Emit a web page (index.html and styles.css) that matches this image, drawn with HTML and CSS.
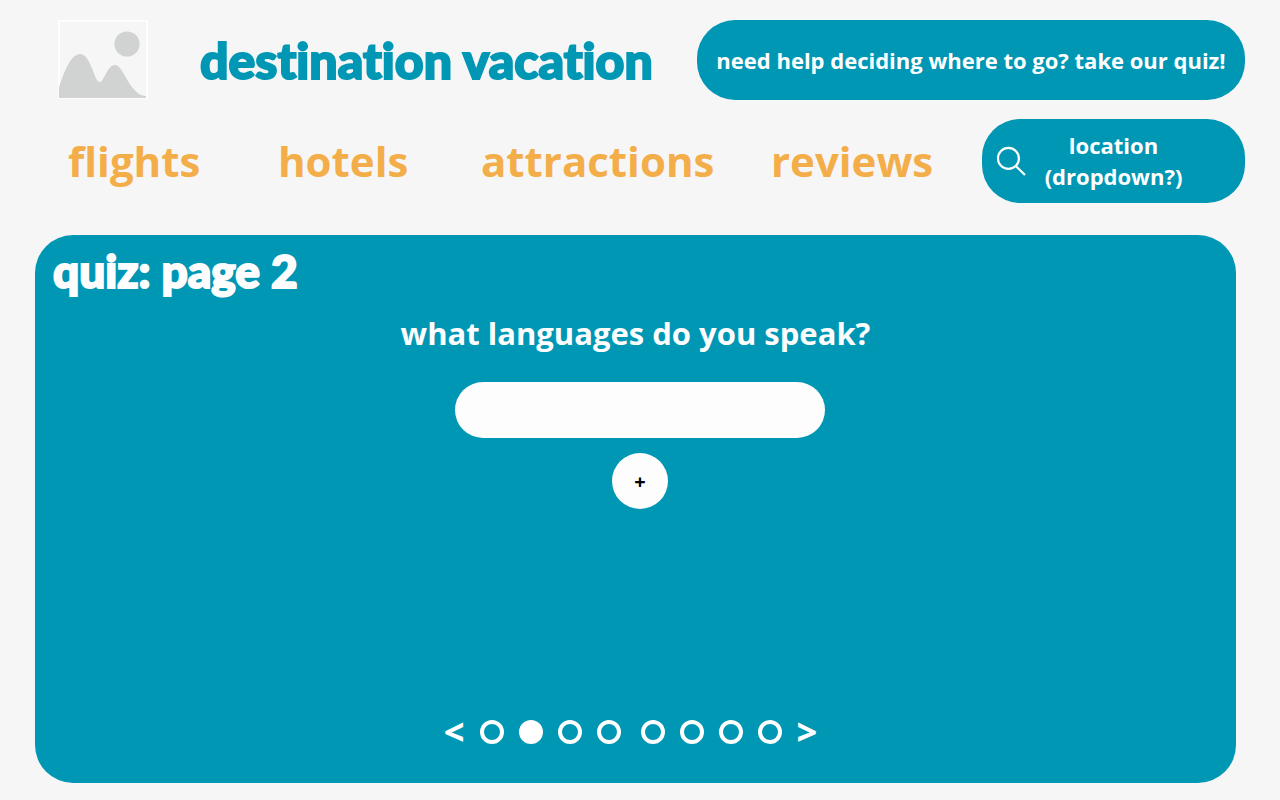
FILE: index.html
```
<!DOCTYPE html>
<html lang="en">
<head>
<meta charset="utf-8">
<meta name="viewport" content="width=device-width, initial-scale=1">
<title>destination vacation</title>
<link rel="stylesheet" href="styles.css">
</head>
<body>
<header class="masthead">
  <svg class="logo" viewBox="0 0 90 80" aria-hidden="true">
    <rect class="logo-frame" x="1" y="1" width="88" height="77"/>
    <circle class="logo-shape" cx="69" cy="24" r="12.6"/>
    <path class="logo-shape" d="M1 78V68C7 48 14 34 22 34C33 34 36 62 42 62C46 62 49 45 57 45C66 45 71 75 88 76V78Z"/>
  </svg>
  <h1 class="brand">destination vacation</h1>
  <a class="quiz-link" href="#quiz">need help deciding where to go? take our quiz!</a>
</header>
<nav class="menu">
  <a href="#flights">flights</a>
  <a href="#hotels">hotels</a>
  <a href="#attractions">attractions</a>
  <a href="#reviews">reviews</a>
  <button class="location" type="button" aria-haspopup="listbox">
    <svg class="search-icon" viewBox="0 0 30 30" aria-hidden="true">
      <circle cx="11.4" cy="12.4" r="10.5"/>
      <path d="M18.5 19.7L28 29"/>
    </svg>
    <span class="location-text">location (dropdown?)</span>
  </button>
</nav>
<main class="card" id="quiz">
  <h2 class="card-title">quiz: page 2</h2>
  <form class="question">
    <label class="prompt" for="language">what languages do you speak?</label>
    <input class="answer" id="language" type="text">
    <button class="add" type="button" aria-label="add language">+</button>
  </form>
  <div class="pager">
    <button class="step" type="button" aria-label="previous page">&lt;</button>
    <div class="dots">
      <input type="radio" name="page" aria-label="page 1">
      <input type="radio" name="page" aria-label="page 2" checked>
      <input type="radio" name="page" aria-label="page 3">
      <input type="radio" name="page" aria-label="page 4">
    </div>
    <div class="dots">
      <input type="radio" name="page" aria-label="page 5">
      <input type="radio" name="page" aria-label="page 6">
      <input type="radio" name="page" aria-label="page 7">
      <input type="radio" name="page" aria-label="page 8">
    </div>
    <button class="step" type="button" aria-label="next page">&gt;</button>
  </div>
</main>
</body>
</html>
```
FILE: styles.css
```
:root {
  --teal: #0097b5;
  --amber: #f3ae49;
  --paper: #f6f6f6;
  --white: #fdfdfd;
}

* {
  box-sizing: border-box;
}

body {
  display: flex;
  flex-direction: column;
  min-height: 100vh;
  margin: 0;
  padding: 20px 35px 17px;
  background: var(--paper);
  font-family: "Open Sans", "Noto Sans", sans-serif;
  font-weight: 700;
}

a {
  text-decoration: none;
}

button {
  border: 0;
  font: inherit;
  cursor: pointer;
}

.masthead {
  display: flex;
  align-items: center;
  min-height: 80px;
  padding-left: 23px;
}

.logo {
  flex: none;
  width: 90px;
  height: 80px;
}

.logo-frame {
  fill: none;
  stroke: #ffffff;
  stroke-width: 1.5;
}

.logo-shape {
  fill: #d1d3d2;
}

.brand,
.card-title {
  font-family: Lato, sans-serif;
  font-weight: 900;
  font-variant-ligatures: none;
  line-height: 60px;
  -webkit-text-stroke: 2px currentColor;
}

.brand {
  margin: 0 auto 0 52px;
  color: var(--teal);
  font-size: 50px;
  white-space: nowrap;
}

.quiz-link {
  display: flex;
  align-items: center;
  justify-content: center;
  width: 548px;
  min-height: 80px;
  border-radius: 38px;
  background: var(--teal);
  color: #ffffff;
  font-size: 22px;
  white-space: nowrap;
}

.menu {
  display: grid;
  grid-template-columns: 210fr 203fr 290fr 211fr 263px;
  align-items: center;
  margin-top: 19px;
  padding-left: 33px;
  color: var(--amber);
  font-size: 42px;
  line-height: 60px;
}

.menu a {
  color: inherit;
}

.location {
  display: grid;
  grid-template-columns: 30px 1fr;
  gap: 15px;
  align-items: center;
  min-height: 84px;
  padding: 0 60px 0 15px;
  border-radius: 38px;
  background: var(--teal);
  color: #ffffff;
  font-size: 22px;
  line-height: 31px;
}

.search-icon {
  width: 30px;
  height: 30px;
  fill: none;
  stroke: #ffffff;
  stroke-width: 2.2;
}

.card {
  display: flex;
  flex: 1;
  flex-direction: column;
  margin: 32px 9px 0 0;
  border-radius: 38px;
  background: var(--teal);
  color: var(--white);
}

.card-title {
  margin: 6px 18px 0;
  font-size: 46px;
}

.question {
  display: flex;
  flex-direction: column;
  align-items: center;
}

.prompt {
  margin-top: 8px;
  font-size: 31px;
  line-height: 48px;
}

.answer {
  width: 370px;
  height: 56px;
  margin: 25px 0 15px 9px;
  padding: 0 24px;
  border: 0;
  border-radius: 28px;
  background: var(--white);
  font: inherit;
  font-size: 22px;
}

.add {
  width: 56px;
  height: 56px;
  margin-left: 9px;
  padding: 0;
  border-radius: 50%;
  background: var(--white);
  color: #000000;
  font-size: 20px;
}

.pager {
  display: flex;
  align-items: center;
  justify-content: center;
  gap: 15px;
  margin: auto 10px 31px 0;
}

.dots {
  display: flex;
  gap: 15px;
}

.dots + .dots {
  margin-left: 5px;
}

.dots input {
  width: 24px;
  height: 24px;
  margin: 0;
  border: 4px solid #ffffff;
  border-radius: 50%;
  appearance: none;
}

.dots input:checked {
  background: #ffffff;
}

.step {
  padding: 0;
  background: none;
  color: #ffffff;
  font-family: "Noto Sans", sans-serif;
  font-size: 36px;
  font-weight: 800;
  line-height: 40px;
}
```
